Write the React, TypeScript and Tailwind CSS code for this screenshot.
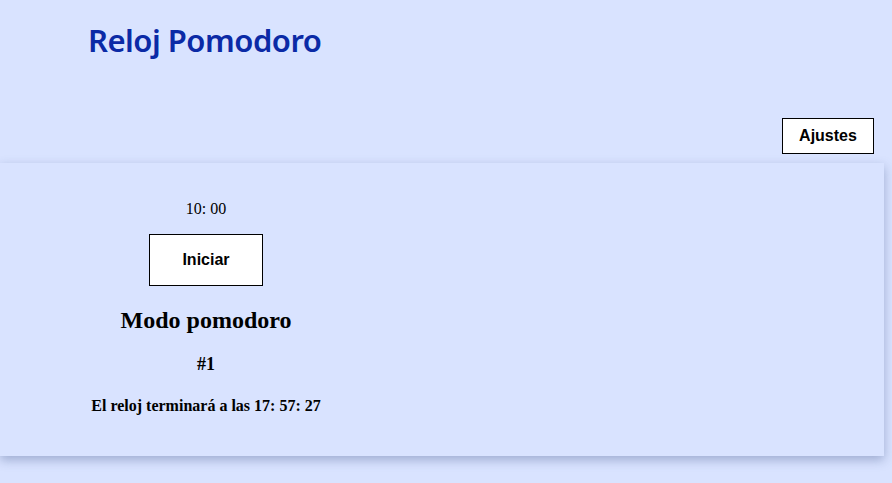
export default function App() {
  return (
    <div className="min-h-[483px] w-full bg-[#d9e3ff] overflow-hidden">
      {/* Header */}
      <header className="pl-[88px] pt-[20px] h-[118px]">
        <h1 className="text-[#0b2aa6] text-[31px] font-semibold leading-[40px] tracking-[-0.5px] font-['Noto_Sans',sans-serif]">
          Reloj Pomodoro
        </h1>
      </header>

      <div className="flex justify-end pr-[18px]">
        <button className="w-[92px] h-[36px] bg-white border border-black text-[16px] font-bold font-['Liberation_Sans',Arial,sans-serif] text-black">
          Ajustes
        </button>
      </div>

      {/* Timer card */}
      <main className="mt-[9px] w-[884px] h-[293px] bg-[#d9e3ff] shadow-[0_4px_10px_rgba(70,90,140,0.4)] font-['Liberation_Serif','Times_New_Roman',serif] text-black">
        <div className="w-[412px] flex flex-col items-center pt-[36px]">
          <p className="text-[16px] leading-[20px]">10: 00</p>
          <button className="mt-[15px] w-[114px] h-[52px] bg-white border border-black text-[16px] font-bold font-['Liberation_Sans',Arial,sans-serif]">
            Iniciar
          </button>
          <h2 className="mt-[19px] text-[24px] font-bold leading-[30px]">Modo pomodoro</h2>
          <h3 className="mt-[17px] text-[18px] font-bold leading-[24px]">#1</h3>
          <p className="mt-[20px] text-[16px] font-bold leading-[20px]">El reloj terminará a las 17: 57: 27</p>
        </div>
      </main>
    </div>
  )
}
